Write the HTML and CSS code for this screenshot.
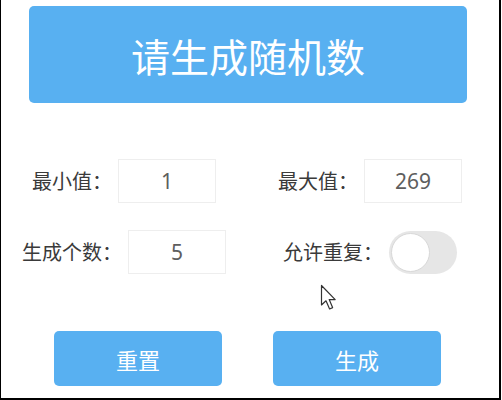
FILE: index.html
```html
<!DOCTYPE html>
<html lang="zh-CN">
<head>
<meta charset="utf-8">
<title>随机数生成</title>
<link rel="stylesheet" href="styles.css">
</head>
<body>
<div class="frame">
  <div class="banner">请生成随机数</div>
  <div class="fields">
    <div class="cell">
      <span class="label">最小值：</span>
      <div class="input">1</div>
    </div>
    <div class="cell">
      <span class="label">最大值：</span>
      <div class="input">269</div>
    </div>
    <div class="cell">
      <span class="label">生成个数：</span>
      <div class="input">5</div>
    </div>
    <div class="cell">
      <span class="label">允许重复：</span>
      <div class="switch"><span class="knob"></span></div>
    </div>
  </div>
  <div class="actions">
    <button class="btn">重置</button>
    <button class="btn">生成</button>
  </div>
  <svg class="cursor" width="18" height="28" viewBox="0 0 18 28">
    <path d="M1.5 1.5 L1.5 21 L6 16.8 L9.6 25 L12.6 23.6 L9.2 15.6 L15.2 15.6 Z" fill="#fff" stroke="#333" stroke-width="1.2" stroke-linejoin="round"/>
  </svg>
</div>
</body>
</html>
```

FILE: styles.css
```css
html, body {
  margin: 0;
  padding: 0;
  background: #ffffff;
}

.frame {
  position: relative;
  box-sizing: border-box;
  width: 501px;
  height: 400px;
  border-left: 1px solid #000;
  border-right: 2px solid #000;
  border-bottom: 2px solid #000;
  font-family: "Noto Sans CJK SC", "Noto Sans", sans-serif;
  overflow: hidden;
}

.banner {
  margin: 6px 0 0 28px;
  width: 438px;
  height: 97px;
  border-radius: 5px;
  background: #58b0f1;
  color: #ffffff;
  font-size: 39px;
  display: flex;
  align-items: center;
  justify-content: center;
  letter-spacing: 0;
}

.fields {
  margin-top: 56px;
  display: grid;
  grid-template-columns: 246px 246px;
  row-gap: 27px;
}

.cell {
  display: flex;
  align-items: center;
  justify-content: center;
  gap: 6px;
}

.label {
  font-size: 20px;
  color: #3a3a3a;
  line-height: 1;
}

.input {
  box-sizing: border-box;
  width: 98px;
  height: 44px;
  border: 1px solid #eeeeee;
  background: #fff;
  display: flex;
  align-items: center;
  justify-content: center;
  font-size: 21px;
  color: #5e5e5e;
  font-family: "Noto Sans", "Open Sans", sans-serif;
}

.switch {
  box-sizing: border-box;
  position: relative;
  width: 68px;
  height: 43px;
  border-radius: 22px;
  background: #e6e6e6;
  display: flex;
  align-items: center;
  padding-left: 2px;
}

.knob {
  box-sizing: border-box;
  width: 39px;
  height: 39px;
  border-radius: 50%;
  background: #ffffff;
  border: 1px solid #d8d8d8;
}

.actions {
  margin-top: 57px;
  padding-left: 53px;
  display: flex;
  gap: 51px;
}

.btn {
  width: 168px;
  height: 55px;
  border: none;
  border-radius: 5px;
  background: #58b0f1;
  color: #ffffff;
  font-family: "Noto Sans CJK SC", sans-serif;
  font-size: 22px;
  padding: 0;
}

.cursor {
  position: absolute;
  left: 319px;
  top: 284px;
}
```
